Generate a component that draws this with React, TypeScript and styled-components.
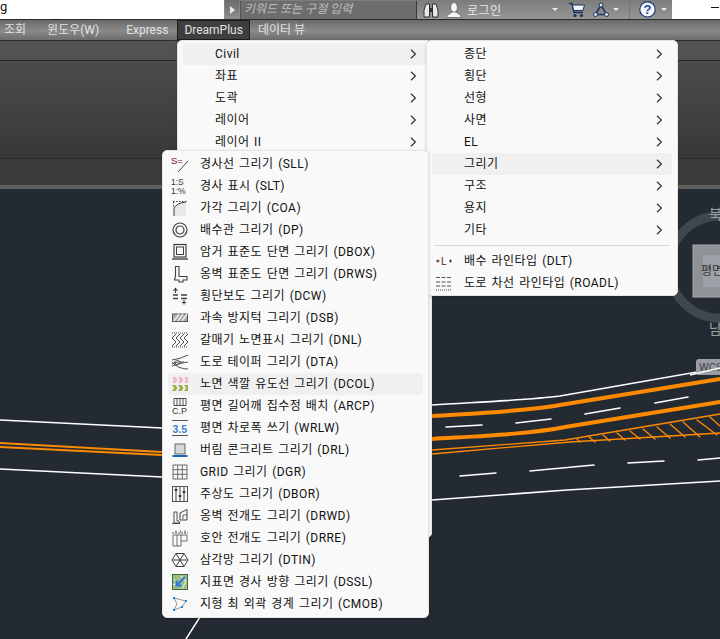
import React from "react";
import styled, { createGlobalStyle } from "styled-components";

const GlobalStyle = createGlobalStyle`
  html, body { margin: 0; padding: 0; background: #232a32; }
  body { font-family: Roboto, "Noto Sans CJK KR", sans-serif; font-size: 12px; }
`;

const Page = styled.div`
  position: relative;
  width: 720px;
  height: 639px;
  overflow: hidden;
  display: flex;
  flex-direction: column;
`;

/* top strip */
const TopBar = styled.div`
  height: 19px;
  flex: none;
  display: flex;
  align-items: center;
  background: linear-gradient(#7c7c7c, #979797);
  border-bottom: 1px solid #2a2a2a;
`;
const Address = styled.div`
  width: 224px;
  height: 19px;
  background: #fff;
  color: #111;
  font-size: 13px;
  line-height: 13px;
`;
const ExpandButton = styled.div`
  width: 14px;
  height: 19px;
  margin-left: 1px;
  display: flex;
  align-items: center;
  justify-content: center;
  background: linear-gradient(#6c6c6c, #8d8d8d);
  &::before {
    content: "";
    border-left: 5px solid #e8e8e8;
    border-top: 4px solid transparent;
    border-bottom: 4px solid transparent;
  }
`;
const SearchBox = styled.div`
  width: 177px;
  height: 18px;
  margin-left: 1px;
  padding-left: 3px;
  box-sizing: border-box;
  background: #6d6d6d;
  border-right: 1px solid #3a3a3a;
  border-left: 1px solid #555;
  color: #bdbdbd;
  font-style: italic;
  font-size: 12px;
  line-height: 17px;
  white-space: nowrap;
`;
const Tool = styled.div<{ $ml: number }>`
  flex: none;
  display: flex;
  align-items: center;
  margin-left: ${(p) => p.$ml}px;
`;
const LoginText = styled.span`
  color: #e6e6e6;
  font-size: 12px;
  letter-spacing: 0.5px;
`;
const Caret = styled.span<{ $ml: number }>`
  flex: none;
  margin-left: ${(p) => p.$ml}px;
  border-top: 3px solid #eee;
  border-left: 3px solid transparent;
  border-right: 3px solid transparent;
`;
const ToolDivider = styled.span`
  flex: none;
  width: 1px;
  height: 18px;
  margin-left: 10px;
  background: #777;
`;
const WindowArea = styled.div`
  flex: 1;
  height: 19px;
  margin-left: 5px;
  background: #fff;
  display: flex;
  justify-content: flex-end;
  padding: 7px 1px 0 0;
  box-sizing: border-box;
  &::after {
    content: "";
    width: 8px;
    height: 1px;
    background: #111;
  }
`;

/* menu bar */
const MenuBar = styled.div`
  height: 20px;
  flex: none;
  display: flex;
  align-items: center;
  background: linear-gradient(#6a6a6a, #8a8a8a 55%, #6c6c6c);
  border-bottom: 1px solid #2e2e2e;
`;
const BarItem = styled.div<{ $ml: number; $active?: boolean }>`
  flex: none;
  margin-left: ${(p) => p.$ml}px;
  color: #e2e2e2;
  font-size: 12px;
  line-height: 18px;
  white-space: nowrap;
  ${(p) =>
    p.$active &&
    `
    height: 18px;
    padding: 0 6px;
    background: #3f3f3f;
    border: 1px solid #1c1c1c;
  `}
`;

/* ribbon */
const Ribbon = styled.div`
  height: 148px;
  flex: none;
  display: flex;
  flex-direction: column;
`;
const RibbonTabs = styled.div`
  height: 19px;
  flex: none;
  background: #525252;
  border-bottom: 1px solid #262626;
`;
const RibbonPanel = styled.div`
  height: 97px;
  flex: none;
  background: linear-gradient(#4c4c4c, #383838);
  border-bottom: 1px solid #292929;
  box-shadow: 0 1px 0 #8c8c8c;
`;
const RibbonFoot = styled.div`
  flex: 1;
  background: #3b3b3b;
`;
const RibbonBand = styled.div`
  height: 4px;
  flex: none;
  background: #5f5f5f;
`;

/* drawing */
const Viewport = styled.svg`
  display: block;
  flex: 1;
  width: 720px;
  background: #232a32;
`;

/* menus */
const Menu = styled.div<{ $left: number; $top: number; $width: number; $height?: number; $z: number }>`
  position: absolute;
  left: ${(p) => p.$left}px;
  top: ${(p) => p.$top}px;
  width: ${(p) => p.$width}px;
  height: ${(p) => (p.$height ? `${p.$height}px` : "auto")};
  z-index: ${(p) => p.$z};
  box-sizing: border-box;
  padding: 2px 5px;
  background: #f9f9f9;
  border: 1px solid #e4e4e4;
  border-radius: 5px;
  box-shadow: 0 1px 3px rgba(0, 0, 0, 0.18);
`;
const Row = styled.div<{ $hot?: boolean }>`
  height: 22px;
  display: grid;
  grid-template-columns: 32px 1fr 16px;
  align-items: center;
  border-radius: 4px;
  color: #111;
  font-size: 12px;
  white-space: nowrap;
  background: ${(p) => (p.$hot ? "#f0f0f0" : "transparent")};
`;
const RowIcon = styled.span`
  display: flex;
  align-items: center;
  padding-left: 3px;
`;
const Label = styled.span`
  line-height: 22px;
  letter-spacing: 0.45px;
  word-spacing: 1.2px;
`;
const Arrow = styled.svg`
  display: block;
`;
const Separator = styled.div`
  height: 1px;
  margin: 4px 2px;
  background: #d6d6d6;
`;

const Chevron = () => (
  <Arrow width="7" height="10" viewBox="0 0 7 10">
    <path d="M1 .8 5.4 5 1 9.2" fill="none" stroke="#333" strokeWidth="1.2" />
  </Arrow>
);

const Ico = ({ children }: { children: React.ReactNode }) => (
  <svg width="18" height="18" viewBox="0 0 18 18" fill="none" stroke="#404040" strokeWidth="1">
    {children}
  </svg>
);

const tiny = { fontFamily: "Liberation Sans, sans-serif", stroke: "none" };

const icons: Record<string, React.ReactNode> = {
  SLL: (
    <Ico>
      <text x="0" y="9" fontSize="9.5" fill="#7a1226" style={tiny}>S=</text>
      <path d="M7 17 17 6" stroke="#444" />
    </Ico>
  ),
  SLT: (
    <Ico>
      <text x="0" y="8" fontSize="8.5" fill="#333" style={tiny}>1:S</text>
      <text x="0" y="17" fontSize="8.5" fill="#333" style={tiny}>1:%</text>
    </Ico>
  ),
  COA: (
    <Ico>
      <path d="M3 17V9Q5 4 15 3V17Z" fill="#e8e8e8" stroke="none" />
      <path d="M3 17V9M15 3Q6 4 3 9" />
      <path d="M2 2.5H16" strokeDasharray="1.5 1.5" />
      <path d="M2.5 3V9" strokeDasharray="1.5 1.5" />
    </Ico>
  ),
  DP: (
    <Ico>
      <circle cx="9" cy="9" r="7" strokeWidth="1.2" />
      <circle cx="9" cy="9" r="4" strokeWidth="1.2" />
    </Ico>
  ),
  DBOX: (
    <Ico>
      <rect x="3" y="1.5" width="12" height="12.5" strokeWidth="1.2" />
      <rect x="5.5" y="4" width="7" height="7.5" />
      <path d="M1 16H17" strokeWidth="1.4" />
    </Ico>
  ),
  DRWS: (
    <Ico>
      <path d="M4.5 1.5H8V11.5H16V15H12V17H8V15H3.5L4.5 11Z" strokeWidth="1.1" />
    </Ico>
  ),
  DCW: (
    <Ico>
      <path d="M2 8H7M2 11.5H7M10 8H16M10 11.5H16" strokeWidth="1.3" />
      <path d="M4.5 1V6M2.5 4 4.5 1.5 6.5 4M13 13V17.5M11 15.5H15" strokeWidth="1.1" />
    </Ico>
  ),
  DSB: (
    <Ico>
      <rect x="1.5" y="5" width="15" height="7.5" fill="#aaa" stroke="#555" />
      <path d="M3 12 8 5M7 12 12 5M11 12 16 5" stroke="#eee" strokeWidth="1.3" />
    </Ico>
  ),
  DNL: (
    <Ico>
      <path d="M1 2H17M1 16H17" strokeDasharray="1 1" />
      <path d="M5 3 1 7 5 11 1 15M9 3 5 7 9 11 5 15M13 3 9 7 13 11 9 15M17 3 13 7 17 11 13 15" strokeWidth=".9" stroke="#333" />
    </Ico>
  ),
  DTA: (
    <Ico>
      <path d="M1 7Q9 6 17 2M1 11Q6 8 13 9M1 13Q8 10 17 9M1 9Q7 16 17 16" strokeWidth=".9" />
      <path d="M3 9 7 7 10 10 6 12Z" strokeWidth=".8" />
    </Ico>
  ),
  DCOL: (
    <Ico>
      <path d="M1 2H4.5L6.5 5 4.5 8H1L3 5ZM7 2H10.5L12.5 5 10.5 8H7L9 5Z" fill="#f2b4cc" stroke="none" />
      <path d="M13 2H17V8H13L15 5Z" fill="#f2b4cc" stroke="none" />
      <path d="M1 10H4.5L6.5 13 4.5 16H1L3 13ZM7 10H10.5L12.5 13 10.5 16H7L9 13Z" fill="#9db24e" stroke="none" />
      <path d="M13 10H17V16H13L15 13Z" fill="#9db24e" stroke="none" />
    </Ico>
  ),
  ARCP: (
    <Ico>
      <path d="M3 8.5V1.5H15V8.5ZM6 1.5V8.5M9 1.5V8.5M12 1.5V8.5" strokeWidth=".9" />
      <text x="1" y="17" fontSize="9" fill="#333" style={tiny}>C.P</text>
    </Ico>
  ),
  WRLW: (
    <Ico>
      <path d="M1 1.5H17M1 16.5H17" stroke="#555" />
      <text x="1.5" y="13.5" fontSize="10.5" fontWeight="700" fill="#3c82c8" style={tiny}>3.5</text>
    </Ico>
  ),
  DRL: (
    <Ico>
      <rect x="4" y="3" width="10" height="10" fill="#d8d8d8" stroke="#666" />
      <path d="M1.5 15H16.5" stroke="#1c66b4" strokeWidth="2" />
    </Ico>
  ),
  DGR: (
    <Ico>
      <path d="M2 2H16V16H2ZM6.7 2V16M11.3 2V16M2 6.7H16M2 11.3H16" stroke="#6a6a6a" />
    </Ico>
  ),
  DBOR: (
    <Ico>
      <rect x="1.5" y="1.5" width="15" height="15" stroke="#555" />
      <path d="M5 2V16M9 2V16M13 2V16" />
      <path d="M3.7 5H6.3M7.7 11H10.3M11.7 7H14.3" strokeWidth="2" stroke="#333" />
    </Ico>
  ),
  DRWD: (
    <Ico>
      <path d="M3 16H9L8 14H6V5H3ZM1 16.5H9" strokeWidth=".9" />
      <path d="M9 13V6L16 2.5V13Z" strokeWidth="1" />
      <path d="M12 12V8H16" strokeWidth=".8" />
    </Ico>
  ),
  DRRE: (
    <Ico>
      <path d="M1 4H17M5 1.5V4M9.5 1.5V4M14 1.5V4" strokeWidth=".9" strokeDasharray="2 1" />
      <path d="M2 6H16V12H10V17H2ZM6 6V17M10 6V12" stroke="#5c5c5c" strokeWidth=".9" />
    </Ico>
  ),
  DTIN: (
    <Ico>
      <path d="M5 2.5H13L17 9 13 15.5H5L1 9ZM5 2.5 9 9 13 2.5M1 9H17M5 15.5 9 9 13 15.5" strokeWidth="1" />
    </Ico>
  ),
  DSSL: (
    <Ico>
      <rect x="1.5" y="1.5" width="15" height="15" fill="#9cc083" stroke="#3f6a46" />
      <path d="M2 12 6 10 3 6M10 3 15 8 11 16" stroke="#e4eed6" strokeWidth="1.1" />
      <path d="M14 4 6 12M5.5 7.5V12.5H10.5" stroke="#2a78dc" strokeWidth="2" />
    </Ico>
  ),
  CMOB: (
    <Ico>
      <path d="M3 3 15 6 11 12 3 15 6 9Z" stroke="#777" strokeWidth=".8" />
      <path d="M2 2H4V4H2ZM14 5H16V7H14ZM10 11H12V13H10ZM2 14H4V16H2Z" fill="#2083d8" stroke="none" />
    </Ico>
  ),
  DLT: (
    <Ico>
      <path d="M1 9H4.5M14 9H17M3 7.5V10.5M15.5 7.5V10.5" stroke="#333" />
      <text x="6" y="13" fontSize="10" fill="#6a1020" style={tiny}>L</text>
    </Ico>
  ),
  ROADL: (
    <Ico>
      <path d="M1 3.5H17M1 8H17M1 12H17" strokeDasharray="4 1.5" strokeWidth=".9" />
      <path d="M1 16H17" strokeDasharray="1 1" />
    </Ico>
  ),
};

const drawItems: [string, string][] = [
  ["SLL", "경사선 그리기 (SLL)"],
  ["SLT", "경사 표시 (SLT)"],
  ["COA", "가각 그리기 (COA)"],
  ["DP", "배수관 그리기 (DP)"],
  ["DBOX", "암거 표준도 단면 그리기 (DBOX)"],
  ["DRWS", "옹벽 표준도 단면 그리기 (DRWS)"],
  ["DCW", "횡단보도 그리기 (DCW)"],
  ["DSB", "과속 방지턱 그리기 (DSB)"],
  ["DNL", "갈매기 노면표시 그리기 (DNL)"],
  ["DTA", "도로 테이퍼 그리기 (DTA)"],
  ["DCOL", "노면 색깔 유도선 그리기 (DCOL)"],
  ["ARCP", "평면 길어깨 집수정 배치 (ARCP)"],
  ["WRLW", "평면 차로폭 쓰기 (WRLW)"],
  ["DRL", "버림 콘크리트 그리기 (DRL)"],
  ["DGR", "GRID 그리기 (DGR)"],
  ["DBOR", "주상도 그리기 (DBOR)"],
  ["DRWD", "옹벽 전개도 그리기 (DRWD)"],
  ["DRRE", "호안 전개도 그리기 (DRRE)"],
  ["DTIN", "삼각망 그리기 (DTIN)"],
  ["DSSL", "지표면 경사 방향 그리기 (DSSL)"],
  ["CMOB", "지형 최 외곽 경계 그리기 (CMOB)"],
];

const Binoculars = () => (
  <svg width="16" height="16" viewBox="0 0 16 16">
    <path d="M1 15V8L3 2H6.5V15ZM9.5 15V2H13L15 8V15Z" fill="#e8e8e8" stroke="#2c2c2c" />
    <path d="M6.5 6H9.5V10H6.5Z" fill="#333" />
  </svg>
);
const UserIcon = () => (
  <svg width="16" height="16" viewBox="0 0 16 16">
    <ellipse cx="8" cy="5.5" rx="3.4" ry="5" fill="#f4f4f4" stroke="#444" strokeWidth=".6" />
    <path d="M.5 15.5C1 12 5 11.5 6 10H10C11 11.5 15 12 15.5 15.5Z" fill="#f4f4f4" stroke="#444" strokeWidth=".6" />
  </svg>
);
const CartIcon = () => (
  <svg width="16" height="16" viewBox="0 0 16 16" fill="none">
    <path d="M0 1.5H3L5 10.5H14" stroke="#16305e" strokeWidth="1.4" />
    <path d="M3.5 3H15.5L14 8.5H4.6Z" fill="#eef2f8" stroke="#16305e" />
    <circle cx="6" cy="13.5" r="1.6" fill="#16305e" />
    <circle cx="12.5" cy="13.5" r="1.6" fill="#16305e" />
  </svg>
);
const LinkIcon = () => (
  <svg width="16" height="16" viewBox="0 0 16 16" fill="none">
    <path d="M8 3 2.5 12.5H13.5Z" stroke="#1c3563" strokeWidth="1.6" />
    <circle cx="8" cy="3" r="2" fill="#dfe6f2" stroke="#1c3563" />
    <circle cx="2.5" cy="12.5" r="2" fill="#dfe6f2" stroke="#1c3563" />
    <circle cx="13.5" cy="12.5" r="2" fill="#dfe6f2" stroke="#1c3563" />
  </svg>
);
const HelpIcon = () => (
  <svg width="17" height="17" viewBox="0 0 17 17">
    <circle cx="8.5" cy="8.5" r="7.7" fill="#f4f6fa" stroke="#1f3a72" strokeWidth="1.2" />
    <text x="8.5" y="13" textAnchor="middle" fontSize="13" fontWeight="700" fill="#1c4aa8" fontFamily="Liberation Sans, sans-serif">?</text>
  </svg>
);

const hatch = [
  "577 439 580 442", "589 437 595 442", "603 435 610 441", "617 433 625 440",
  "630 431 640 439", "643 429 655 439", "657 427 670 438", "670 424 685 437",
  "683 422 700 437", "697 420 717 435", "710 417 720 426",
];

export default function App() {
  return (
    <Page>
      <GlobalStyle />
      <TopBar>
        <Address>g</Address>
        <ExpandButton />
        <SearchBox>키워드 또는 구절 입력</SearchBox>
        <Tool $ml={6}><Binoculars /></Tool>
        <Tool $ml={7}><UserIcon /></Tool>
        <Tool $ml={5}><LoginText>로그인</LoginText></Tool>
        <Caret $ml={50} />
        <Tool $ml={11}><CartIcon /></Tool>
        <Tool $ml={8}><LinkIcon /></Tool>
        <Caret $ml={4} />
        <ToolDivider />
        <Tool $ml={9}><HelpIcon /></Tool>
        <Caret $ml={5} />
        <WindowArea />
      </TopBar>
      <MenuBar>
        <BarItem $ml={4}>조회</BarItem>
        <BarItem $ml={21}>윈도우(W)</BarItem>
        <BarItem $ml={27}>Express</BarItem>
        <BarItem $ml={9} $active>DreamPlus</BarItem>
        <BarItem $ml={8}>데이터 뷰</BarItem>
      </MenuBar>
      <Ribbon>
        <RibbonTabs />
        <RibbonPanel />
        <RibbonFoot />
        <RibbonBand />
      </Ribbon>
      <Viewport viewBox="0 189 720 450">
        <g fill="none" strokeLinecap="round">
          <circle cx="720" cy="267" r="51" stroke="#41474f" strokeWidth="9" />
          <g stroke="#ffffff" strokeWidth="1.6">
            <path d="M0 420 162 428" />
            <path d="M0 469 162 477" />
            <path d="M432 405 C480 402 530 400 560 396 L720 368" />
            <path d="M432 500 567 490 720 481" />
            <path d="M446 427 482 425M516 423 551 419M585 414 620 408M655 403 688 397" />
            <path d="M460 476 496 473M530 471 594 465M628 463 664 461M698 460 720 458" />
          </g>
          <g stroke="#ff8a00">
            <path d="M432 416 C480 413 530 411 560 405 L720 379" strokeWidth="4" />
            <path d="M432 439 C480 436 530 434 565 427 L720 402" strokeWidth="4" />
            <path d="M0 443 162 452M0 447 162 455" strokeWidth="1.8" />
            <path d="M432 450 565 440 720 414M432 454 570 442 720 433" strokeWidth="1.3" />
            {hatch.map((l) => (
              <polyline key={l} points={l} strokeWidth="1.3" />
            ))}
          </g>
          <path d="M200 617 186 639" stroke="#fff" strokeWidth="1.4" />
        </g>
        <rect x="693" y="245" width="40" height="52" fill="#8f9296" stroke="#a8abae" />
        <rect x="703" y="255" width="30" height="32" fill="#9ca2a8" />
        <text x="701" y="275" fontSize="12" fill="#333">평면</text>
        <text x="709" y="219" fontSize="14" fill="#9aa0a6">북</text>
        <text x="709" y="334" fontSize="14" fill="#9aa0a6">남</text>
        <rect x="696" y="359" width="40" height="16" rx="3" fill="#9a9ca6" />
        <text x="699" y="371" fontSize="11" fill="#444">WCS</text>
        <path d="M690 375 720 368" stroke="#fff" strokeWidth="1.6" />
      </Viewport>

      <Menu $left={177} $top={40} $width={255} $height={498} $z={1}>
        {["Civil", "좌표", "도곽", "레이어", "레이어 II"].map((t, i) => (
          <Row key={t} $hot={i === 0}>
            <span />
            <Label>{t}</Label>
            <Chevron />
          </Row>
        ))}
      </Menu>
      <Menu $left={426} $top={40} $width={252} $height={256} $z={2}>
        {["종단", "횡단", "선형", "사면", "EL", "그리기", "구조", "용지", "기타"].map((t) => (
          <Row key={t} $hot={t === "그리기"}>
            <span />
            <Label>{t}</Label>
            <Chevron />
          </Row>
        ))}
        <Separator />
        <Row>
          <RowIcon>{icons.DLT}</RowIcon>
          <Label>배수 라인타입 (DLT)</Label>
        </Row>
        <Row>
          <RowIcon>{icons.ROADL}</RowIcon>
          <Label>도로 차선 라인타입 (ROADL)</Label>
        </Row>
      </Menu>
      <Menu $left={162} $top={150} $width={267} $z={3}>
        {drawItems.map(([key, text]) => (
          <Row key={key} $hot={key === "DCOL"}>
            <RowIcon>{icons[key]}</RowIcon>
            <Label>{text}</Label>
          </Row>
        ))}
      </Menu>
    </Page>
  );
}
